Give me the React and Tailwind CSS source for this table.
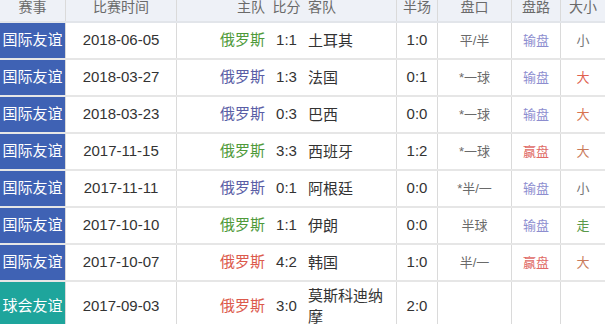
import React from "react";

const GREEN = "text-[#4f9a3a]";
const BLUE = "text-[#5a5ea6]";
const RED = "text-[#dc5a4c]";

const rows = [
  { cat: "国际友谊", teal: false, date: "2018-06-05", hc: GREEN, score: "1:1", away: "土耳其", half: "1:0", pk: "平/半", pl: "输盘", plc: "text-[#8d8dcf]", dx: "小", dxc: "text-[#777]" },
  { cat: "国际友谊", teal: false, date: "2018-03-27", hc: BLUE, score: "1:3", away: "法国", half: "0:1", pk: "*一球", pl: "输盘", plc: "text-[#8d8dcf]", dx: "大", dxc: "text-[#e0614f]" },
  { cat: "国际友谊", teal: false, date: "2018-03-23", hc: BLUE, score: "0:3", away: "巴西", half: "0:0", pk: "*一球", pl: "输盘", plc: "text-[#8d8dcf]", dx: "大", dxc: "text-[#d8734f]" },
  { cat: "国际友谊", teal: false, date: "2017-11-15", hc: GREEN, score: "3:3", away: "西班牙", half: "1:2", pk: "*一球", pl: "赢盘", plc: "text-[#e06a66]", dx: "大", dxc: "text-[#c97a5a]" },
  { cat: "国际友谊", teal: false, date: "2017-11-11", hc: BLUE, score: "0:1", away: "阿根廷", half: "0:0", pk: "*半/一", pl: "输盘", plc: "text-[#8d8dcf]", dx: "小", dxc: "text-[#777]" },
  { cat: "国际友谊", teal: false, date: "2017-10-10", hc: GREEN, score: "1:1", away: "伊朗", half: "0:0", pk: "半球", pl: "输盘", plc: "text-[#8d8dcf]", dx: "走", dxc: "text-[#5a9a4a]" },
  { cat: "国际友谊", teal: false, date: "2017-10-07", hc: RED, score: "4:2", away: "韩国", half: "1:0", pk: "半/一", pl: "赢盘", plc: "text-[#e06a66]", dx: "大", dxc: "text-[#c97a5a]" },
  { cat: "球会友谊", teal: true, date: "2017-09-03", hc: RED, score: "3:0", away: "莫斯科迪纳摩", half: "2:0", pk: "", pl: "", plc: "", dx: "", dxc: "" },
];

const grid = "grid grid-cols-[66px_111px_93px_33px_94px_41px_74px_49px_44px]";
const vline = "border-r border-[#dadada]";

export default function App() {
  return (
    <div
      className="w-[605px] h-[324px] overflow-hidden bg-white"
      style={{ fontFamily: '"Liberation Sans", "Noto Sans CJK SC", sans-serif' }}
    >
      <div className={`${grid} h-[23px] bg-[#eef1f7] border-b-2 border-[#e2e5ea] text-[14px] leading-[15px] text-[#6a6a6a]`}>
        <div className={`${vline} flex justify-center`}>赛事</div>
        <div className={`${vline} flex justify-center`}>比赛时间</div>
        <div className="flex justify-end pr-[5px]">主队</div>
        <div className="flex justify-center">比分</div>
        <div className={`${vline} flex justify-start pl-[5px]`}>客队</div>
        <div className={`${vline} flex justify-center`}>半场</div>
        <div className={`${vline} flex justify-center`}>盘口</div>
        <div className={`${vline} flex justify-center`}>盘路</div>
        <div className="flex justify-center">大小</div>
      </div>
      {rows.map((r, i) => {
        const last = i === rows.length - 1;
        return (
          <div
            key={i}
            className={`${grid} ${last ? "h-[50px]" : "h-[37px]"} border-b-2 border-[#e6e6e6] text-[15px] text-[#333]`}
          >
            <div
              className={`${vline} flex items-center justify-center text-white ${r.teal ? "bg-[#1ea59c]" : "bg-[#3f62b4]"}`}
            >
              {r.cat}
            </div>
            <div className={`${vline} flex items-center justify-center`}>{r.date}</div>
            <div className={`flex items-center justify-end pr-[5px] ${r.hc}`}>俄罗斯</div>
            <div className="flex items-center justify-center">{r.score}</div>
            <div className={`${vline} flex items-center pl-[5px] leading-[21px]`}>
              {last ? (
                <span>
                  莫斯科迪纳
                  <br />摩
                </span>
              ) : (
                r.away
              )}
            </div>
            <div className={`${vline} flex items-center justify-center`}>{r.half}</div>
            <div className={`${vline} flex items-center justify-center text-[13px] text-[#6a6a6a]`}>{r.pk}</div>
            <div className={`${vline} flex items-center justify-center text-[13px] ${r.plc}`}>{r.pl}</div>
            <div className={`flex items-center justify-center text-[13px] ${r.dxc}`}>{r.dx}</div>
          </div>
        );
      })}
    </div>
  );
}
